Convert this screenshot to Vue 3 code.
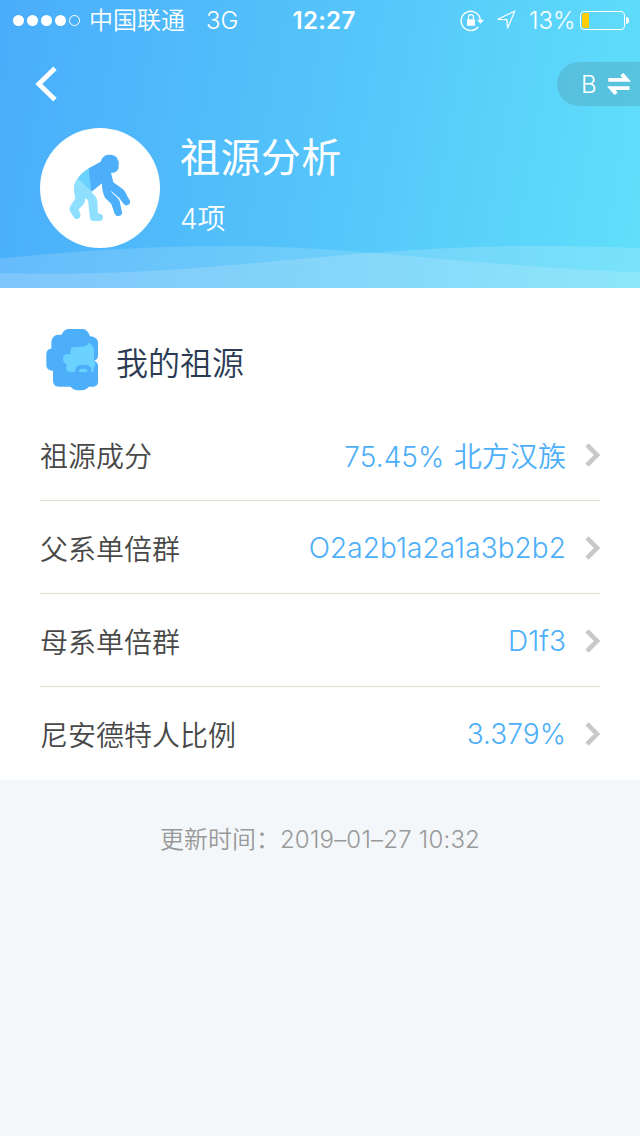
<script setup>
import { ref } from 'vue'

const version = ref('B')

const items = [
  { label: '祖源成分', value: '75.45% 北方汉族', key: 'composition' },
  { label: '父系单倍群', value: 'O2a2b1a2a1a3b2b2', key: 'paternal' },
  { label: '母系单倍群', value: 'D1f3', key: 'maternal' },
  { label: '尼安德特人比例', value: '3.379%', key: 'neanderthal' }
]

const toggleVersion = () => {
  version.value = version.value === 'B' ? 'A' : 'B'
}
</script>

<template>
  <div class="page">
    <header class="hero">
      <div class="status-bar">
        <div class="status-left">
          <div class="signal">
            <i v-for="n in 5" :key="n" class="dot" :class="{ empty: n === 5 }"></i>
          </div>
          <span class="carrier">中国联通</span>
          <span class="network">3G</span>
        </div>
        <span class="clock">12:27</span>
        <div class="status-right">
          <svg class="lock" width="24" height="22" viewBox="0 0 24 22">
            <path d="M20.300 10A9.600 9.600 0 1 0 18.300 16.800" fill="none" stroke="#fff" stroke-width="1.400" />
            <path d="M17 9.800h7l-3.500 4z" fill="#fff" />
            <rect x="7" y="9.300" width="8" height="6.500" rx="0.600" fill="#fff" />
            <path d="M8.500 9.500V7.300a2.500 2.600 0 0 1 5 0v2.200" fill="none" stroke="#fff" stroke-width="1.200" />
          </svg>
          <svg class="location" width="20" height="21" viewBox="0 0 20 21">
            <path d="M1.800 9.300 18.700 1.200 11.600 18.300 10.900 9.700z" fill="none" stroke="#fff" stroke-width="1.200" />
          </svg>
          <span class="percent">13%</span>
          <div class="battery">
            <div class="battery-fill"></div>
          </div>
          <i class="battery-cap"></i>
        </div>
      </div>

      <nav class="nav">
        <svg class="back" width="24" height="36" viewBox="0 0 24 36">
          <path d="M21 2.200 4.800 18 21 33.800" fill="none" stroke="#fff" stroke-width="4.800" />
        </svg>
        <button class="switch" @click="toggleVersion">
          <span class="switch-text">{{ version }}</span>
          <svg width="24" height="22" viewBox="0 0 24 22">
            <path d="M1.300 5H15.500L13.300 2.300 16.500 0 24 8.800H1.300z" fill="#fff" />
            <path d="M22.500 13.300V17H8.600L10.600 19.700 7.500 22 0 13.300z" fill="#fff" />
          </svg>
        </button>
      </nav>

      <div class="profile">
        <div class="avatar">
          <svg width="120" height="120" viewBox="30 24 360 360">
            <path
              d="M142 176 184 216Q200 230 202 244L204 280 212 282A11 11 0 0 1 211 303H190Q181 302 180 294L174 240 167 235Q165 247 159 255L146 268 151 283A11 11 0 0 1 132 293L119 272Q117 265 121 258L136 235Q130 215 132 198Q134 186 142 176Z"
              fill="#8fe0ff"
            />
            <path d="M142 176 184 216 180 143Q157 154 142 176Z" fill="#6bd2ff" />
            <path
              d="M176 145 212 125C217 108 229 103 241 104C255 106 263 112 263 119Q269 126 266 137C267 151 256 160 243 158L250 187 279 208Q285 213 290 225L300 242A11 11 0 0 1 281 252L268 234 241 211 249 221Q264 232 269 244L275 272A11 11 0 0 1 254 281L244 252 225 233Q216 217 216 190L184 216Z"
              fill="#4daffa"
            />
          </svg>
        </div>
        <div class="profile-text">
          <h1>祖源分析</h1>
          <p>4项</p>
        </div>
      </div>

      <svg class="waves" width="640" height="48" viewBox="0 0 640 48">
        <path d="M0 18.500C75 11 150 6 230 6C350 6 450 24 640 32.500V48H0z" fill="#fff" fill-opacity="0.15" />
        <path d="M0 33C210 39 330 6 540 6Q590 6 640 8V48H0z" fill="#fff" fill-opacity="0.16" />
      </svg>
    </header>

    <section class="card">
      <div class="card-head">
        <svg width="53" height="63" viewBox="30 24 159 189">
          <path
            d="M99 27H139C151 27 158 37 162 49C176 50 186 57 186 68V107C186 115 182 120 174 122C182 124 186 130 186 138V185C186 195 179 200 170 200H159C153 207 145 211 132 211C117 211 109 207 104 200H69C57 200 51 193 51 181V152C38 152 31 145 31 134V105C31 92 37 86 46 86V70C46 53 55 44 68 44H77C81 33 88 27 99 27Z"
            fill="#4daffa"
          />
          <path
            d="M104 90C104 84 108 81 117 81L139 80C149 79 156 75 158 68C169 74 174 82 174 91V107C174 115 174 119 174 122C180 128 179 137 174 141C172 145 173 150 173 156H166V149C166 139 157 134 143 134C127 134 118 139 118 149V156H103C94 156 91 151 91 144V132C84 130 81 125 81 117C81 108 87 103 94 103H104Z"
            fill="#6bd2ff"
          />
          <path d="M129 156C128 149 133 146 141 146C150 146 155 149 154 156Z" fill="#6bd2ff" />
        </svg>
        <h2>我的祖源</h2>
      </div>
      <ul class="list">
        <li v-for="item in items" :key="item.key" class="row">
          <span class="label">{{ item.label }}</span>
          <span class="value">{{ item.value }}</span>
          <svg class="arrow" width="15" height="24" viewBox="0 0 15 24">
            <path d="M2 1.800 12 12 2 22.200" fill="none" stroke="#c8c8c8" stroke-width="4.600" />
          </svg>
        </li>
      </ul>
    </section>

    <p class="updated">更新时间：<span class="date">2019–01–27 10:32</span></p>
  </div>
</template>

<style>
body {
  background: #f3f7fa;
}
</style>

<style scoped>
.page {
  width: 640px;
  min-height: 1136px;
  background: #f3f7fa;
  font-family: Inter, "Noto Sans CJK SC", sans-serif;
  font-weight: 350;
}

h1,
h2,
p,
ul {
  margin: 0;
  padding: 0;
  font-weight: inherit;
}

.hero {
  position: relative;
  height: 288px;
  background: linear-gradient(100deg, #4aadfb 0%, #54c4fa 50%, #60dffa 100%);
  color: #fff;
}

.status-bar {
  display: grid;
  grid-template-columns: 280px 88px 1fr;
  align-items: center;
  height: 41px;
  font-size: 24px;
  line-height: 41px;
}

.status-left,
.status-right,
.signal {
  display: flex;
  align-items: center;
}

.status-left {
  padding-left: 13px;
}

.signal {
  gap: 3px;
}

.dot {
  box-sizing: border-box;
  width: 11px;
  height: 11px;
  border-radius: 50%;
  background: #fff;
}

.dot.empty {
  border: 1px solid #fff;
  background: none;
}

.carrier {
  margin-left: 9px;
}

.network {
  margin-left: 21px;
}

.clock {
  text-align: center;
  font-weight: 600;
  letter-spacing: 0.3px;
}

.status-right {
  padding-left: 92px;
}

.location {
  margin-left: 12px;
}

.percent {
  margin-left: 13px;
  width: 46px;
  white-space: nowrap;
}

.battery {
  box-sizing: border-box;
  flex: none;
  width: 45px;
  height: 19px;
  margin-left: 5px;
  padding: 1px;
  border: 1px solid #fff;
  border-radius: 4px;
}

.battery-fill {
  width: 7px;
  height: 15px;
  border-radius: 2px 0 0 2px;
  background: #fc0;
}

.battery-cap {
  width: 3px;
  height: 7px;
  margin-left: 1px;
  border-radius: 0 3px 3px 0;
  background: #fff;
}

.nav {
  display: flex;
  align-items: center;
  justify-content: space-between;
  height: 86px;
  margin-bottom: 1px;
  padding-left: 34px;
}

.switch {
  display: flex;
  align-items: center;
  box-sizing: border-box;
  width: 83px;
  height: 44px;
  padding: 0 0 0 24px;
  border: 0;
  border-radius: 22px 0 0 22px;
  background: rgba(76, 153, 170, 0.35);
  color: #fff;
  font: inherit;
  font-size: 24px;
}

.switch-text {
  width: 26px;
  text-align: left;
}

.profile {
  display: flex;
  padding-left: 40px;
}

.avatar {
  width: 120px;
  height: 120px;
  border-radius: 50%;
  background: #fff;
}

.profile-text {
  padding: 2px 0 0 20px;
}

h1 {
  font-size: 40px;
  font-weight: 400;
  letter-spacing: 0.4px;
  line-height: 56px;
}

.profile-text p {
  margin-top: 13px;
  font-size: 28px;
  line-height: 40px;
}

.waves {
  position: absolute;
  left: 0;
  bottom: 0;
}

.card {
  height: 492px;
  background: #fff;
}

.card-head {
  display: flex;
  align-items: center;
  box-sizing: border-box;
  height: 120px;
  padding: 26px 46px 4px;
}

h2 {
  margin: 3px 0 0 17px;
  color: #2b3b54;
  font-size: 32px;
}

.list {
  list-style: none;
  margin: 0 40px;
}

.row {
  display: flex;
  align-items: center;
  box-sizing: border-box;
  height: 93px;
  padding-top: 2px;
  border-bottom: 1px solid #dcdccf;
  font-size: 28px;
}

.row:last-child {
  border-bottom-color: transparent;
}

.label {
  flex: 1;
  color: #484848;
}

.value {
  color: #4daffa;
  letter-spacing: 0.06px;
  word-spacing: 1.5px;
}

.arrow {
  margin-left: 19px;
}

.updated {
  padding-top: 42px;
  color: #999;
  font-size: 24px;
  line-height: 36px;
  text-align: center;
}

.date {
  letter-spacing: 0.2px;
}
</style>
